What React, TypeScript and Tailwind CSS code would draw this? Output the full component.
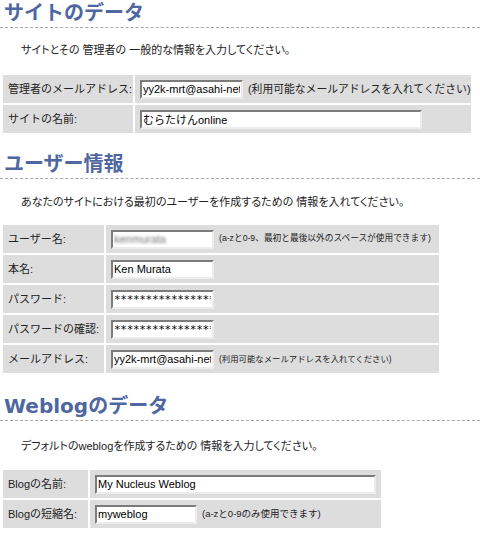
import type { ReactNode } from "react";

const SANS = "font-['Liberation_Sans','Noto_Sans_CJK_JP',sans-serif]";

type Row = {
  label: string;
  value: string;
  width: string;
  hint?: string;
  hintSize?: string;
  blurred?: boolean;
  mono?: boolean;
};

function Heading({ children, className }: { children: ReactNode; className: string }) {
  return (
    <h2
      className={`h-[28px] border-b border-dashed border-[#a8a8a8] pl-[4px] text-[20px] font-bold leading-[26px] text-[#4f67a0] font-['DejaVu_Sans','Noto_Sans_CJK_JP',sans-serif] ${className}`}
    >
      {children}
    </h2>
  );
}

function Field({ value, width, blurred, mono }: { value: string; width: string; blurred?: boolean; mono?: boolean }) {
  return (
    <input
      type="text"
      readOnly
      defaultValue={value}
      className={`${width} h-[19px] shrink-0 border-2 border-t-[#7c7c7c] border-l-[#7c7c7c] border-b-[#ececec] border-r-[#ececec] bg-white px-[1px] text-[11px] leading-[15px] text-black outline-none ${
        mono ? "font-['DejaVu_Sans_Mono',monospace] tracking-[-0.3px]" : SANS
      } ${blurred ? "text-transparent [text-shadow:0_0_3px_rgba(0,0,0,0.55)]" : ""}`}
    />
  );
}

function FormTable({ rows, cols, width, className }: { rows: Row[]; cols: string; width: string; className: string }) {
  return (
    <div className={`grid ${cols} ${width} gap-[2px] p-[2px] pl-[3px] ${className}`}>
      {rows.map((r) => (
        <div key={r.label} className="contents">
          <div className={`flex h-[28px] items-center bg-[#dddddd] pl-[5px] text-[11px] text-[#222] ${SANS}`}>{r.label}</div>
          <div className="flex h-[28px] items-center bg-[#dddddd] pl-[5px]">
            <Field value={r.value} width={r.width} blurred={r.blurred} mono={r.mono} />
            {r.hint && (
              <span className={`ml-[5px] whitespace-nowrap text-[#222] ${r.hintSize ?? "text-[11px]"} ${SANS}`}>{r.hint}</span>
            )}
          </div>
        </div>
      ))}
    </div>
  );
}

const SITE: Row[] = [
  {
    label: "管理者のメールアドレス:",
    value: "yy2k-mrt@asahi-net.or.jp",
    width: "w-[103px]",
    hint: "(利用可能なメールアドレスを入れてください)",
    hintSize: "text-[10.8px]",
  },
  { label: "サイトの名前:", value: "むらたけんonline", width: "w-[282px]" },
];

const USER: Row[] = [
  {
    label: "ユーザー名:",
    value: "kenmurata",
    width: "w-[103px]",
    blurred: true,
    hint: "(a-zと0-9、最初と最後以外のスペースが使用できます)",
    hintSize: "text-[8.7px]",
  },
  { label: "本名:", value: "Ken Murata", width: "w-[103px]" },
  { label: "パスワード:", value: "****************", width: "w-[103px]", mono: true },
  { label: "パスワードの確認:", value: "****************", width: "w-[103px]", mono: true },
  {
    label: "メールアドレス:",
    value: "yy2k-mrt@asahi-net.or.jp",
    width: "w-[103px]",
    hint: "(利用可能なメールアドレスを入れてください)",
    hintSize: "text-[8.4px]",
  },
];

const BLOG: Row[] = [
  { label: "Blogの名前:", value: "My Nucleus Weblog", width: "w-[281px]" },
  {
    label: "Blogの短縮名:",
    value: "myweblog",
    width: "w-[102px]",
    hint: "(a-zと0-9のみ使用できます)",
    hintSize: "text-[9.5px]",
  },
];

function Desc({ children, className }: { children: ReactNode; className: string }) {
  return (
    <p className={`pl-[21px] text-[11px] leading-[16px] text-[#222] [font-feature-settings:'palt'] ${SANS} ${className}`}>
      {children}
    </p>
  );
}

export default function App() {
  return (
    <div className="h-[535px] w-[480px] overflow-hidden bg-white">
      <Heading className="">サイトのデータ</Heading>
      <Desc className="mt-[14px]">サイトとその 管理者の 一般的な情報を入力してください。</Desc>
      <FormTable rows={SITE} cols="grid-cols-[130px_336px]" width="w-[471px]" className="mt-[15px]" />

      <Heading className="mt-[16px]">ユーザー情報</Heading>
      <Desc className="mt-[15px]">あなたのサイトにおける最初のユーザーを作成するための 情報を入れてください。</Desc>
      <FormTable rows={USER} cols="grid-cols-[101px_333px]" width="w-[439px]" className="mt-[13px]" />

      <Heading className="mt-[18px]">Weblogのデータ</Heading>
      <Desc className="mt-[17px]">デフォルトのweblogを作成するための 情報を入力してください。</Desc>
      <FormTable rows={BLOG} cols="grid-cols-[85px_291px]" width="w-[381px]" className="mt-[14px]" />
    </div>
  );
}
